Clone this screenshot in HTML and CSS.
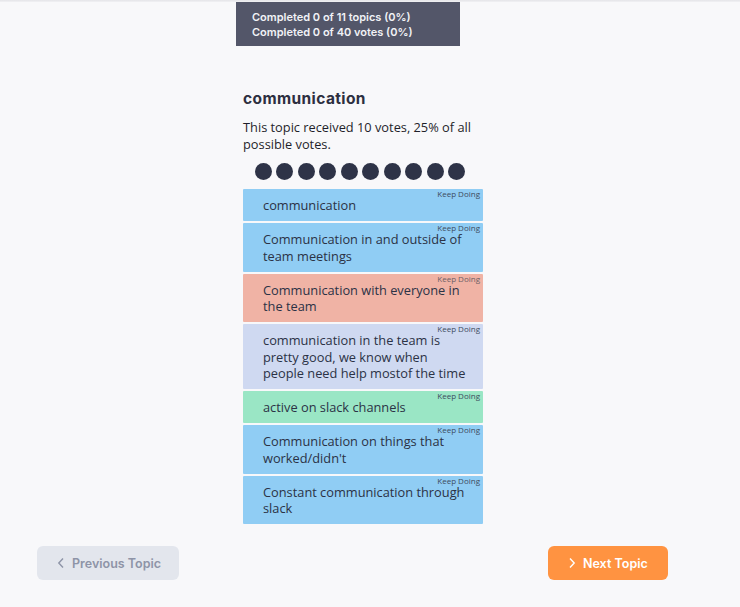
FILE: index.html
```html
<!DOCTYPE html>
<html>
<head>
<meta charset="utf-8">
<link rel="stylesheet" href="styles.css">
</head>
<body>
<div class="topbar"></div>
<div class="stats">
  <div>Completed 0 of 11 topics (0%)</div>
  <div>Completed 0 of 40 votes (0%)</div>
</div>
<main class="topic">
  <h2 class="title">communication</h2>
  <p class="summary">This topic received 10 votes, 25% of all possible votes.</p>
  <div class="dots">
    <span></span><span></span><span></span><span></span><span></span><span></span><span></span><span></span><span></span><span></span>
  </div>
  <div class="cards">
    <div class="card blue"><span class="tag">Keep Doing</span>communication</div>
    <div class="card blue"><span class="tag">Keep Doing</span>Communication in and outside of team meetings</div>
    <div class="card salmon"><span class="tag">Keep Doing</span>Communication with everyone in the team</div>
    <div class="card lavender"><span class="tag">Keep Doing</span>communication in the team is pretty good, we know when people need help mostof the time</div>
    <div class="card green"><span class="tag">Keep Doing</span>active on slack channels</div>
    <div class="card blue"><span class="tag">Keep Doing</span>Communication on things that worked/didn't</div>
    <div class="card blue"><span class="tag">Keep Doing</span>Constant communication through slack</div>
  </div>
</main>
<nav class="nav">
  <button class="btn prev"><svg width="8" height="12" viewBox="0 0 8 12"><path d="M6 1.5 L1.8 6 L6 10.5" fill="none" stroke="currentColor" stroke-width="1.4"/></svg>Previous Topic</button>
  <button class="btn next"><svg width="8" height="12" viewBox="0 0 8 12"><path d="M2 1.5 L6.2 6 L2 10.5" fill="none" stroke="currentColor" stroke-width="1.4"/></svg>Next Topic</button>
</nav>
</body>
</html>
```
FILE: styles.css
```css
html, body {
  margin: 0;
  padding: 0;
}
body {
  background: #f8f8fa;
  width: 740px;
  height: 607px;
  overflow: hidden;
  font-family: "Open Sans", "Liberation Sans", sans-serif;
  color: #2d3348;
}
.topbar {
  height: 2px;
  background: linear-gradient(#e4e4e8, #f1f1f4);
}
.stats {
  margin-left: 236px;
  width: 224px;
  height: 44px;
  box-sizing: border-box;
  padding: 8px 16px 0;
  background: #535669;
  color: #f1f2f6;
  font-family: "Inter", "Liberation Sans", sans-serif;
  font-weight: 600;
  font-size: 11px;
  line-height: 15px;
}
.topic {
  margin-left: 243px;
  width: 240px;
  padding-top: 42px;
}
.title {
  margin: 0;
  font-family: "Inter", "Liberation Sans", sans-serif;
  font-weight: 700;
  font-size: 15.5px;
  letter-spacing: 0.4px;
  line-height: 22px;
  color: #2d2f3f;
}
.summary {
  margin: 9px 0 0;
  font-size: 12.8px;
  line-height: 16.5px;
  color: #1f1f2a;
}
.dots {
  display: flex;
  justify-content: center;
  gap: 4.5px;
  margin-top: 11px;
  margin-right: 6px;
  height: 17px;
}
.dots span {
  width: 17px;
  height: 17px;
  border-radius: 50%;
  background: #2e3347;
}
.cards {
  margin-top: 9px;
  display: flex;
  flex-direction: column;
  gap: 2px;
}
.card {
  position: relative;
  padding: 8px 15px 7.5px 20px;
  font-size: 12.8px;
  line-height: 16.5px;
  color: #2b3245;
  border-radius: 1px;
}
.card.blue { background: #90cdf4; }
.card.salmon { background: #f0b3a5; }
.card.lavender { background: #cfd9f1; }
.card.green { background: #9ae6c5; }
.card.salmon .tag { color: #6b5f66; }
.tag {
  position: absolute;
  top: 1px;
  right: 3px;
  font-size: 8px;
  line-height: 7px;
  color: #3d4b60;
}
.nav {
  position: absolute;
  left: 37px;
  top: 546px;
  width: 631px;
  display: flex;
  justify-content: space-between;
}
.btn {
  height: 34px;
  border: none;
  border-radius: 6px;
  display: flex;
  align-items: center;
  gap: 7px;
  font-family: "Inter", "Liberation Sans", sans-serif;
  font-weight: 600;
  font-size: 12.5px;
  cursor: pointer;
}
.btn.prev {
  width: 142px;
  padding-left: 20px;
  background: #e3e6ed;
  color: #8e94a7;
}
.btn.next {
  width: 120px;
  padding-left: 20px;
  background: #ff9341;
  color: #ffffff;
}
```
